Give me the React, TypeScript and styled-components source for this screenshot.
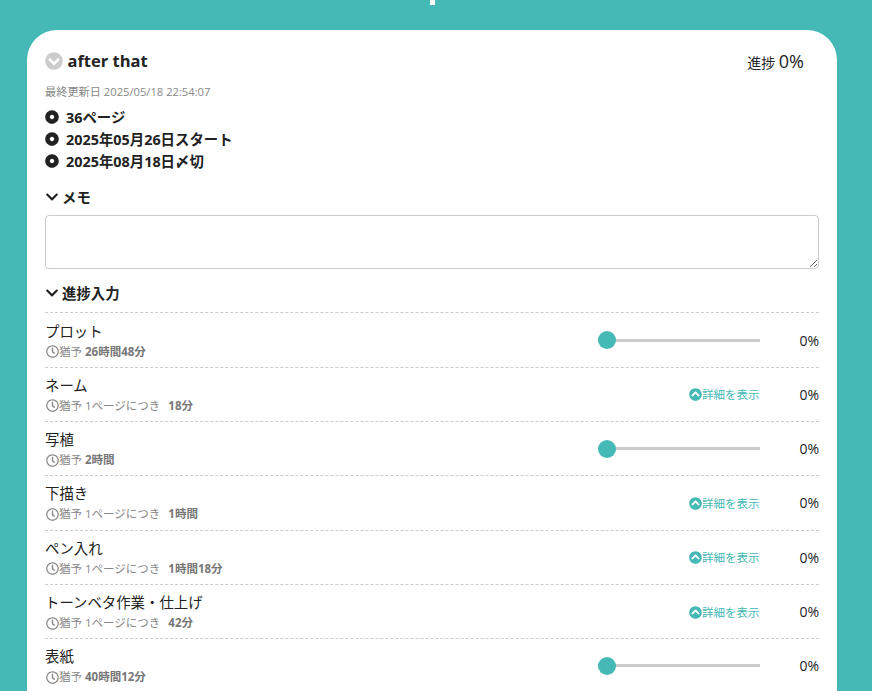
import styled, { createGlobalStyle } from "styled-components";
import {
  FaChevronCircleDown,
  FaChevronCircleUp,
  FaChevronDown,
  FaDotCircle,
  FaRegClock,
} from "react-icons/fa";

const GlobalStyle = createGlobalStyle`
  html, body {
    margin: 0;
    height: 100%;
    overflow: hidden;
    background: #45b9b5;
  }
  body {
    font-family: "Open Sans", "Noto Sans CJK JP", sans-serif;
    color: #222222;
  }
`;

const Page = styled.div`
  height: 100vh;
  overflow: hidden;
  padding: 0 35px 0 27px;
`;

const TopBar = styled.div`
  height: 30px;
  display: flex;
  justify-content: center;
`;

const TopMark = styled.div`
  width: 5px;
  height: 5px;
  background: #ffffff;
`;

const Card = styled.div`
  background: #ffffff;
  border-radius: 30px 30px 0 0;
  padding: 19px 18px 40px;
`;

const Head = styled.div`
  display: flex;
  justify-content: space-between;
  align-items: center;
  height: 23px;
`;

const Title = styled.h1`
  margin: 0;
  display: flex;
  align-items: center;
  gap: 5px;
  font-size: 16.5px;
  font-weight: 700;
  color: #222222;
  svg {
    color: #cccccc;
    font-size: 18px;
    margin-left: -0.5px;
  }
`;

const Progress = styled.div`
  margin-right: 15px;
  font-size: 14px;
  b {
    font-size: 18px;
    font-weight: 400;
  }
`;

const Updated = styled.div`
  margin-top: 12px;
  font-size: 11.2px;
  line-height: 16px;
  color: #888888;
`;

const Facts = styled.ul`
  list-style: none;
  margin: 5px 0 0;
  padding: 0;
`;

const Fact = styled.li`
  display: flex;
  align-items: center;
  gap: 7px;
  height: 22px;
  font-size: 14.4px;
  font-weight: 700;
  svg {
    font-size: 14px;
    margin-top: 2px;
  }
`;

const SectionTitle = styled.h2`
  margin: 0;
  display: flex;
  align-items: center;
  gap: 3px;
  height: 20px;
  font-size: 14.4px;
  font-weight: 700;
  svg {
    font-size: 14px;
    margin-top: 2px;
  }
`;

const MemoTitle = styled(SectionTitle)`
  margin-top: 15px;
`;

const Memo = styled.textarea`
  display: block;
  box-sizing: border-box;
  width: 100%;
  height: 54px;
  margin-top: 9px;
  border: 1px solid #cccccc;
  border-radius: 4px;
  background: #ffffff;
`;

const InputTitle = styled(SectionTitle)`
  margin-top: 13px;
  margin-bottom: 10.4px;
`;

const Row = styled.div`
  display: flex;
  align-items: center;
  height: 54.3px;
  box-sizing: border-box;
  border-top: 1px dashed #cccccc;
`;

const RowText = styled.div`
  flex: 1;
  min-width: 0;
  padding-top: 1px;
`;

const StepName = styled.div`
  font-size: 14.4px;
  line-height: 20px;
`;

const Margin = styled.div`
  display: flex;
  align-items: center;
  margin-top: 2px;
  font-size: 11.5px;
  line-height: 16px;
  color: #888888;
  svg {
    font-size: 13px;
    margin: 0 0 0 1px;
  }
  b {
    font-weight: 700;
    color: #777777;
  }
`;

const PerPage = styled.span`
  margin-right: 8px;
`;

const Gap = styled.span`
  margin-right: 3px;
`;

const Range = styled.input`
  appearance: none;
  width: 162px;
  height: 18px;
  margin: 0;
  background: transparent;
  &::-webkit-slider-runnable-track {
    height: 3px;
    background: #cccccc;
  }
  &::-webkit-slider-thumb {
    appearance: none;
    width: 18px;
    height: 18px;
    margin-top: -7.5px;
    border-radius: 50%;
    background: #45b9b5;
  }
`;

const DetailLink = styled.a`
  display: flex;
  align-items: center;
  width: 71px;
  white-space: nowrap;
  font-size: 11.5px;
  color: #45b9b5;
  svg {
    font-size: 13px;
    margin-top: 1px;
  }
`;

const Percent = styled.div`
  width: 59px;
  text-align: right;
  font-size: 14px;
`;

type Step = {
  name: string;
  time: string;
  perPage?: boolean;
};

const steps: Step[] = [
  { name: "プロット", time: "26時間48分" },
  { name: "ネーム", time: "18分", perPage: true },
  { name: "写植", time: "2時間" },
  { name: "下描き", time: "1時間", perPage: true },
  { name: "ペン入れ", time: "1時間18分", perPage: true },
  { name: "トーンベタ作業・仕上げ", time: "42分", perPage: true },
  { name: "表紙", time: "40時間12分" },
];

function App() {
  return (
    <Page>
      <GlobalStyle />
      <TopBar>
        <TopMark />
      </TopBar>
      <Card>
        <Head>
          <Title>
            <FaChevronCircleDown />
            after that
          </Title>
          <Progress>
            進捗 <b>0%</b>
          </Progress>
        </Head>
        <Updated>最終更新日 2025/05/18 22:54:07</Updated>
        <Facts>
          <Fact>
            <FaDotCircle />
            36ページ
          </Fact>
          <Fact>
            <FaDotCircle />
            2025年05月26日スタート
          </Fact>
          <Fact>
            <FaDotCircle />
            2025年08月18日〆切
          </Fact>
        </Facts>
        <MemoTitle>
          <FaChevronDown />
          メモ
        </MemoTitle>
        <Memo />
        <InputTitle>
          <FaChevronDown />
          進捗入力
        </InputTitle>
        {steps.map((step) => (
          <Row key={step.name}>
            <RowText>
              <StepName>{step.name}</StepName>
              <Margin>
                <FaRegClock />
                <Gap>猶予</Gap>
                {step.perPage && <PerPage>1ページにつき</PerPage>}
                <b>{step.time}</b>
              </Margin>
            </RowText>
            {step.perPage ? (
              <DetailLink>
                <FaChevronCircleUp />
                詳細を表示
              </DetailLink>
            ) : (
              <Range type="range" min={0} max={100} defaultValue={0} />
            )}
            <Percent>0%</Percent>
          </Row>
        ))}
      </Card>
    </Page>
  );
}

export default App;
